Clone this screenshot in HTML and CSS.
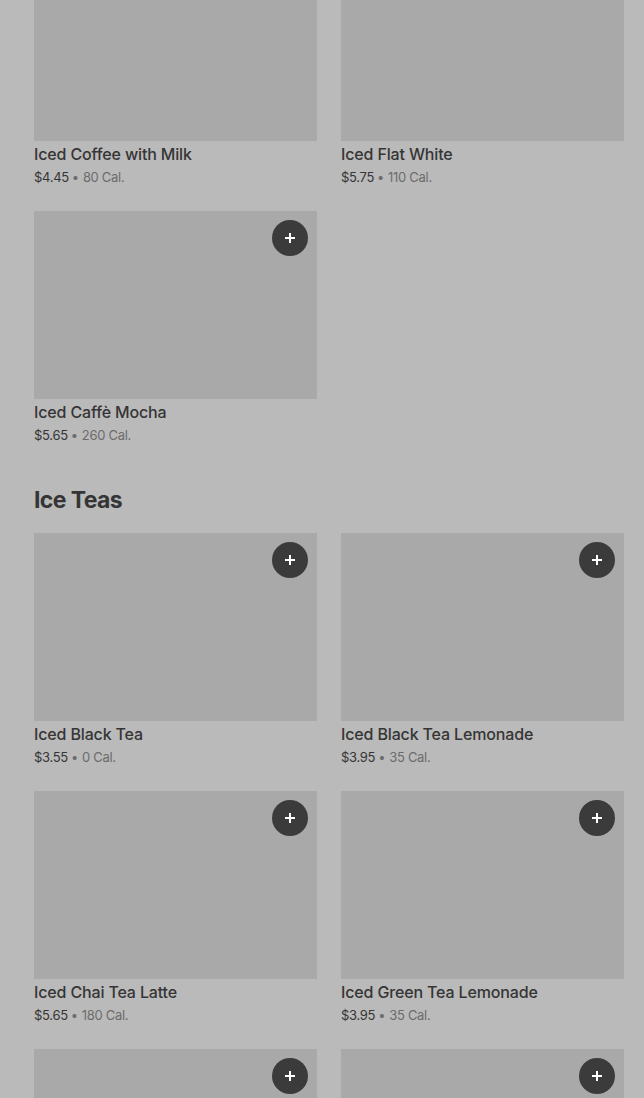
FILE: index.html
```html
<!DOCTYPE html>
<html lang="en">
<head>
<meta charset="utf-8">
<title>Menu</title>
<link rel="stylesheet" href="styles.css">
</head>
<body>
<main class="menu">
  <section class="section section-first">
    <div class="grid">
      <article class="item">
        <div class="thumb"></div>
        <div class="caption">
          <div class="name">Iced Coffee with Milk</div>
          <div class="meta"><span class="price">$4.45</span><span class="cal"><span class="dot">•</span>80 Cal.</span></div>
        </div>
      </article>
      <article class="item">
        <div class="thumb"></div>
        <div class="caption">
          <div class="name">Iced Flat White</div>
          <div class="meta"><span class="price">$5.75</span><span class="cal"><span class="dot">•</span>110 Cal.</span></div>
        </div>
      </article>
      <article class="item">
        <div class="thumb">
          <button class="add" aria-label="Add"><svg viewBox="0 0 12 12" width="12" height="12"><path d="M6 1v10M1 6h10" stroke="#fff" stroke-width="2"/></svg></button>
        </div>
        <div class="caption">
          <div class="name">Iced Caffè Mocha</div>
          <div class="meta"><span class="price">$5.65</span><span class="cal"><span class="dot">•</span>260 Cal.</span></div>
        </div>
      </article>
    </div>
  </section>

  <section class="section">
    <h2 class="heading">Ice Teas</h2>
    <div class="grid">
      <article class="item">
        <div class="thumb">
          <button class="add" aria-label="Add"><svg viewBox="0 0 12 12" width="12" height="12"><path d="M6 1v10M1 6h10" stroke="#fff" stroke-width="2"/></svg></button>
        </div>
        <div class="caption">
          <div class="name">Iced Black Tea</div>
          <div class="meta"><span class="price">$3.55</span><span class="cal"><span class="dot">•</span>0 Cal.</span></div>
        </div>
      </article>
      <article class="item">
        <div class="thumb">
          <button class="add" aria-label="Add"><svg viewBox="0 0 12 12" width="12" height="12"><path d="M6 1v10M1 6h10" stroke="#fff" stroke-width="2"/></svg></button>
        </div>
        <div class="caption">
          <div class="name">Iced Black Tea Lemonade</div>
          <div class="meta"><span class="price">$3.95</span><span class="cal"><span class="dot">•</span>35 Cal.</span></div>
        </div>
      </article>
      <article class="item">
        <div class="thumb">
          <button class="add" aria-label="Add"><svg viewBox="0 0 12 12" width="12" height="12"><path d="M6 1v10M1 6h10" stroke="#fff" stroke-width="2"/></svg></button>
        </div>
        <div class="caption">
          <div class="name">Iced Chai Tea Latte</div>
          <div class="meta"><span class="price">$5.65</span><span class="cal"><span class="dot">•</span>180 Cal.</span></div>
        </div>
      </article>
      <article class="item">
        <div class="thumb">
          <button class="add" aria-label="Add"><svg viewBox="0 0 12 12" width="12" height="12"><path d="M6 1v10M1 6h10" stroke="#fff" stroke-width="2"/></svg></button>
        </div>
        <div class="caption">
          <div class="name">Iced Green Tea Lemonade</div>
          <div class="meta"><span class="price">$3.95</span><span class="cal"><span class="dot">•</span>35 Cal.</span></div>
        </div>
      </article>
      <article class="item">
        <div class="thumb">
          <button class="add" aria-label="Add"><svg viewBox="0 0 12 12" width="12" height="12"><path d="M6 1v10M1 6h10" stroke="#fff" stroke-width="2"/></svg></button>
        </div>
      </article>
      <article class="item">
        <div class="thumb">
          <button class="add" aria-label="Add"><svg viewBox="0 0 12 12" width="12" height="12"><path d="M6 1v10M1 6h10" stroke="#fff" stroke-width="2"/></svg></button>
        </div>
      </article>
    </div>
  </section>
</main>
</body>
</html>
```

FILE: styles.css
```css
html, body {
  margin: 0;
  padding: 0;
  background: #bababa;
  height: 1098px;
  overflow: hidden;
}

body {
  font-family: Inter, "Liberation Sans", Arial, sans-serif;
  color: #353535;
}

.menu {
  padding: 0 20px 0 34px;
}

.section-first {
  margin-top: -47px;
}

.heading {
  margin: 39px 0 17px;
  font-size: 23px;
  line-height: 32px;
  font-weight: 700;
  letter-spacing: -0.6px;
  color: #353535;
}

.grid {
  display: grid;
  grid-template-columns: 283px 283px;
  column-gap: 24px;
  row-gap: 24px;
}

.thumb {
  position: relative;
  height: 188px;
  background: #a9a9a9;
}

.add {
  position: absolute;
  top: 9px;
  right: 9px;
  width: 36px;
  height: 36px;
  border: 0;
  padding: 0;
  border-radius: 50%;
  background: #3b3b3b;
  display: flex;
  align-items: center;
  justify-content: center;
}

.add svg {
  display: block;
}

.caption {
  padding-top: 3px;
}

.name {
  font-size: 16px;
  line-height: 20px;
  font-weight: 500;
  letter-spacing: -0.15px;
  color: #353535;
}

.meta {
  margin-top: 3px;
  height: 20px;
  font-size: 13px;
  line-height: 20px;
  letter-spacing: -0.3px;
}

.price {
  color: #353535;
}

.cal {
  color: #6c6c6c;
}

.dot {
  margin: 0 4px 0 3px;
}
```
